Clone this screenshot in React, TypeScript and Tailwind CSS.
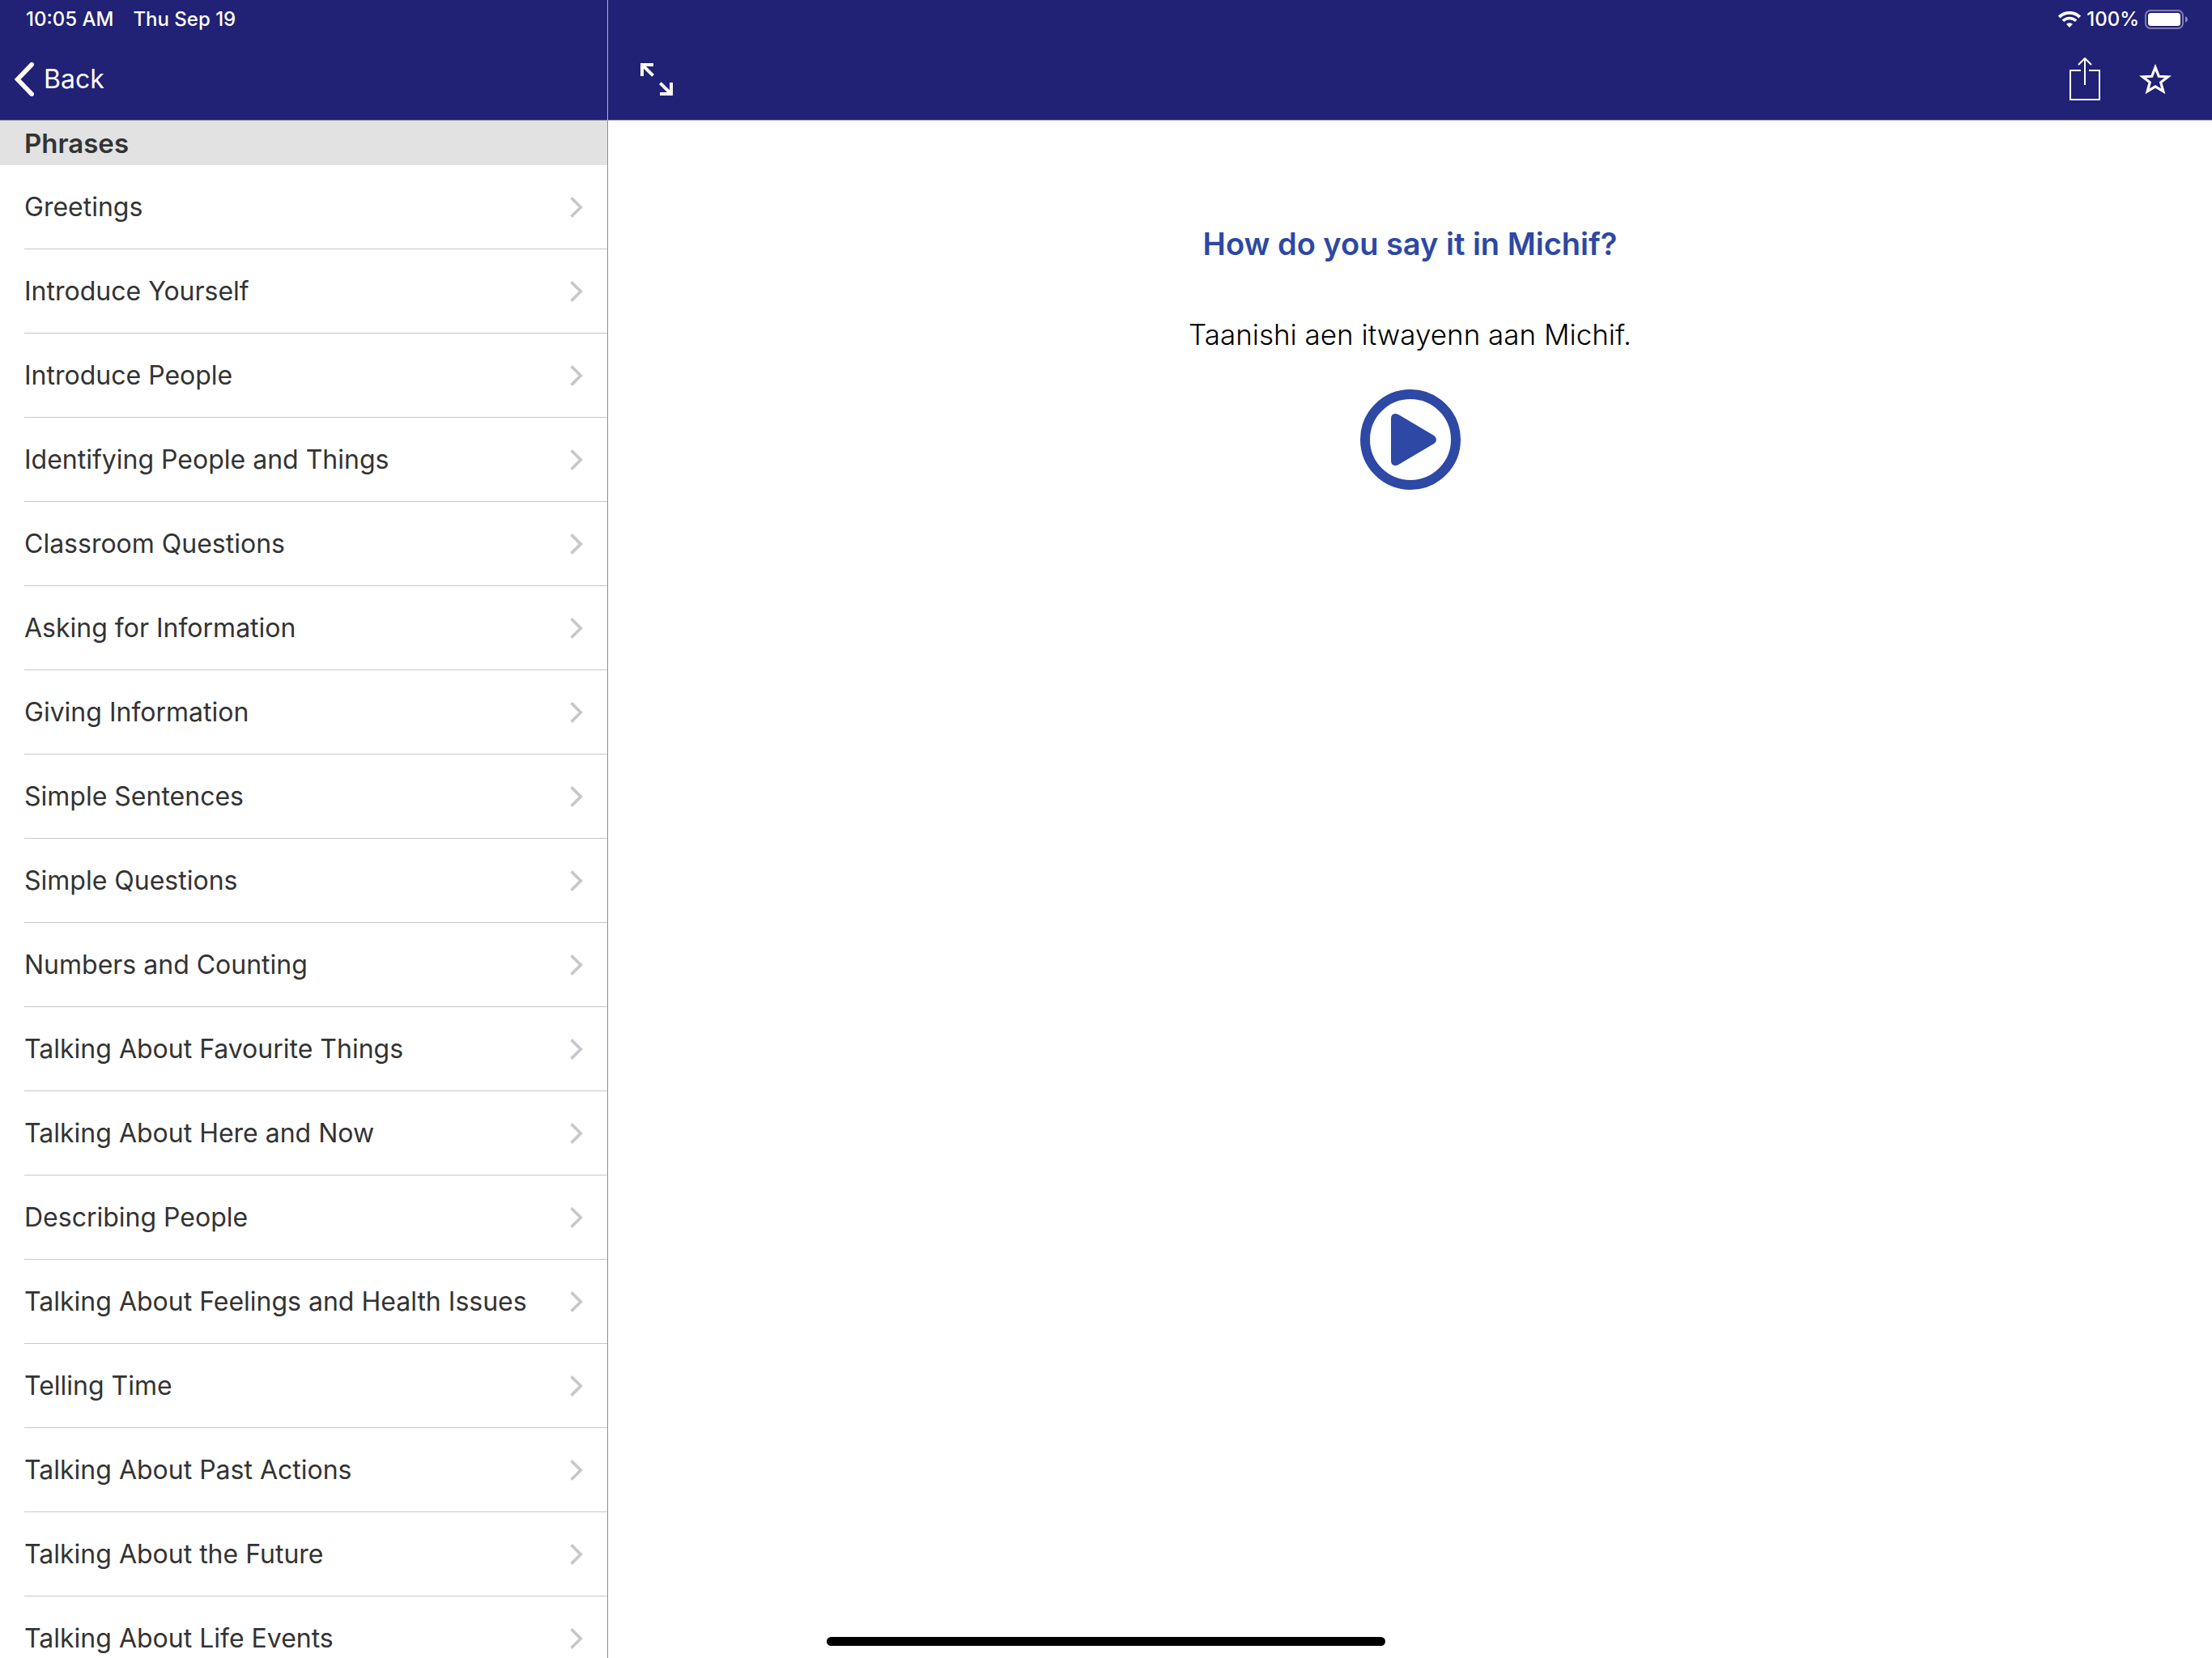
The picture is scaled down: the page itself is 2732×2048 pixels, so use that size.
import { useState } from "react";

const phrases = [
  "Greetings",
  "Introduce Yourself",
  "Introduce People",
  "Identifying People and Things",
  "Classroom Questions",
  "Asking for Information",
  "Giving Information",
  "Simple Sentences",
  "Simple Questions",
  "Numbers and Counting",
  "Talking About Favourite Things",
  "Talking About Here and Now",
  "Describing People",
  "Talking About Feelings and Health Issues",
  "Telling Time",
  "Talking About Past Actions",
  "Talking About the Future",
  "Talking About Life Events",
];

function ChevronLeft() {
  return (
    <svg className="w-6 h-[42px]" viewBox="0 0 24 42" fill="none" stroke="currentColor" strokeWidth="5.6" strokeLinecap="round" strokeLinejoin="miter">
      <path d="M21.2 2.8 3.6 21l17.6 18.2" />
    </svg>
  );
}

function ChevronRight() {
  return (
    <svg className="w-4 h-[26px] shrink-0 text-[#c7c7cc]" viewBox="0 0 16 26" fill="none" stroke="currentColor" strokeWidth="3.6">
      <path d="M1.6 1.4 13.3 13 1.6 24.6" />
    </svg>
  );
}

function ExpandIcon() {
  return (
    <svg className="size-10" viewBox="0 0 40 40" fill="currentColor">
      <path d="M0 0h16v4H7l10 10-2.8 2.8L4 6.8V16H0z" />
      <path d="M40 40H24v-4h9L23 26l2.8-2.8L36 33.2V24h4z" />
    </svg>
  );
}

function ShareIcon() {
  return (
    <svg className="w-[38px] h-[54px]" viewBox="0 0 38 54" fill="none" stroke="currentColor" strokeWidth="2">
      <path d="M14 16H1v36h36V16H24" />
      <path d="M19 .5V34M11 9l8-8 8 8" />
    </svg>
  );
}

function StarIcon() {
  return (
    <svg className="w-10 h-[38px]" viewBox="0 0 40 38" fill="none" stroke="currentColor" strokeWidth="3.2">
      <path d="M20 4.2 24.3 15.3 35.6 15.8 26.7 22.8 29.8 33.8 20 27.8 10.2 33.8 13.3 22.8 4.4 15.8 15.7 15.3z" />
    </svg>
  );
}

function WifiIcon() {
  return (
    <svg className="w-7 h-5" viewBox="0 0 28 20" fill="none" stroke="currentColor" strokeWidth="4">
      <path d="M1.3 7a18.2 18.2 0 0 1 25.4 0" />
      <path d="M5.9 11.8a11.6 11.6 0 0 1 16.2 0" strokeWidth="3.6" />
      <path d="M14 20l-4-4.2a6 6 0 0 1 8 0z" fill="currentColor" stroke="none" />
    </svg>
  );
}

function BatteryIcon() {
  return (
    <svg className="w-[54px] h-6" viewBox="0 0 54 24">
      <rect x="1" y="1" width="46" height="22" rx="6" fill="none" stroke="#fff" strokeOpacity=".42" strokeWidth="2" />
      <rect x="4" y="4" width="40" height="16" rx="3.5" fill="#fff" />
      <path d="M50 8q3 1.400 3 4t-3 4z" fill="#fff" fillOpacity=".5" />
    </svg>
  );
}

function PlayIcon() {
  return (
    <svg className="size-[124px]" viewBox="0 0 124 124">
      <circle cx="62" cy="62" r="56" fill="none" stroke="currentColor" strokeWidth="12" />
      <path d="M38 36q0-6 5.500-6 2.200 0 4.500 1.600L91 57q3 2 3 5t-3 5L48 92.400Q45.700 94 43.500 94 38 94 38 88z" fill="currentColor" />
    </svg>
  );
}

export default function App() {
  const [starred, setStarred] = useState(false);

  return (
    <div className="relative flex h-screen overflow-hidden bg-white font-['Inter',sans-serif]">
      {/* Sidebar */}
      <aside className="flex flex-col w-[751px] shrink-0">
        <header className="shrink-0 bg-[#212176] text-white border-r border-b border-r-[#b4b4b8] border-b-[#8f8f97]">
          <div className="flex items-center gap-6 h-12 pl-8 text-2xl font-medium">
            <span>10:05 AM</span>
            <span>Thu Sep 19</span>
          </div>
          <nav className="flex items-center h-[100px] pl-[18px]">
            <button className="flex items-center gap-3 text-[32px] leading-10">
              <ChevronLeft />
              Back
            </button>
          </nav>
        </header>
        <div className="flex-1 min-h-0 overflow-hidden border-r border-[#8e8e8e] text-[32px] leading-10 text-[#333]">
          <h2 className="flex items-center h-[55px] pl-[30px] bg-[#e2e2e2] text-[33px] font-semibold">Phrases</h2>
          <ul className="pl-[30px]">
            {phrases.map((phrase) => (
              <li key={phrase} className="h-[104px] border-b border-[#c8c7cc]">
                <a href="#" className="flex items-center justify-between h-full pr-[30px]">
                  {phrase}
                  <ChevronRight />
                </a>
              </li>
            ))}
          </ul>
        </div>
      </aside>

      {/* Detail */}
      <main className="flex flex-col flex-1 min-w-0">
        <header className="shrink-0 bg-[#212176] text-white border-b border-[#a5a5ab]">
          <div className="flex items-center justify-end gap-[7px] h-12 pr-[29px] text-2xl font-medium">
            <WifiIcon />
            <span>100%</span>
            <BatteryIcon />
          </div>
          <nav className="flex items-center h-[100px] pl-10 pr-[50px]">
            <button aria-label="Full screen"><ExpandIcon /></button>
            <button aria-label="Share" className="ml-auto"><ShareIcon /></button>
            <button aria-label="Favourite" aria-pressed={starred} onClick={() => setStarred(!starred)} className="ml-12">
              <StarIcon />
            </button>
          </nav>
        </header>
        <section className="flex flex-col items-center pt-32 text-center">
          <h1 className="text-[38px] leading-12 font-semibold text-[#2d48a5]">How do you say it in Michif?</h1>
          <p className="mt-16 text-[35px] leading-12 font-light text-black">Taanishi aen itwayenn aan Michif.</p>
          <button aria-label="Play" className="mt-11 text-[#2d48a5]"><PlayIcon /></button>
        </section>
      </main>

      {/* Home indicator */}
      <div className="absolute bottom-[15px] left-1/2 -translate-x-1/2 w-[690px] h-[11px] rounded-full bg-black" />
    </div>
  );
}
